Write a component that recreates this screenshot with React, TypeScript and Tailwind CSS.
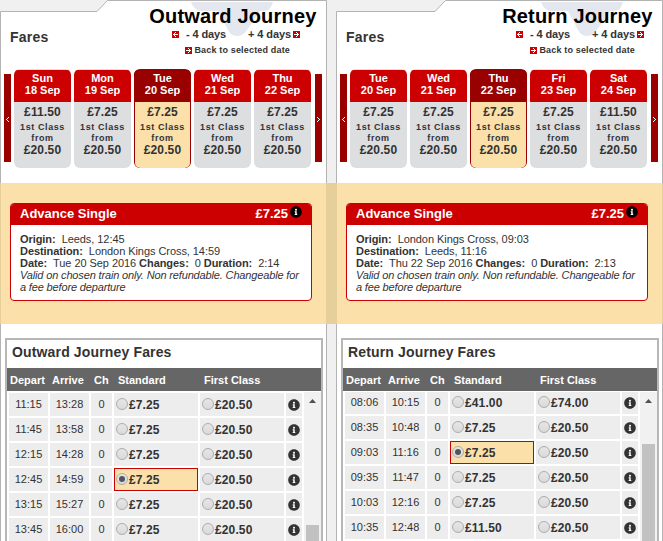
import { useState } from 'react';
import { FaInfoCircle } from 'react-icons/fa';
import clsx from 'clsx';

type Day = { name: string; date: string; standard: string; first: string };
type Train = { depart: string; arrive: string; changes: number; standard: string; first: string };
type Journey = {
  title: string;
  days: Day[];
  selectedDay: number;
  origin: string;
  destination: string;
  date: string;
  duration: string;
  trains: Train[];
  selectedTrain: number;
  notch: number;
  markX: number;
  shiftDays: string;
  shiftBack: string;
  scroll: string;
  thumb: string;
};

const day = (name: string, date: string, standard = '£7.25'): Day => ({ name, date, standard, first: '£20.50' });
const train = (depart: string, arrive: string, standard = '£7.25', first = '£20.50'): Train => ({ depart, arrive, changes: 0, standard, first });

const OUTWARD: Journey = {
  title: 'Outward Journey',
  days: [day('Sun', '18 Sep', '£11.50'), day('Mon', '19 Sep'), day('Tue', '20 Sep'), day('Wed', '21 Sep'), day('Thu', '22 Sep')],
  selectedDay: 2,
  origin: 'Leeds, 12:45',
  destination: 'London Kings Cross, 14:59',
  date: 'Tue 20 Sep 2016',
  duration: '2:14',
  trains: [
    train('11:15', '13:28'), train('11:45', '13:58'), train('12:15', '14:28'),
    train('12:45', '14:59'), train('13:15', '15:27'), train('13:45', '16:00'),
  ],
  selectedTrain: 3,
  notch: 97,
  markX: 191,
  shiftDays: 'pr-[27px]',
  shiftBack: 'pr-[37px]',
  scroll: 'mt-px',
  thumb: 'mt-[133px]',
};

const RETURN: Journey = {
  title: 'Return Journey',
  days: [day('Tue', '20 Sep'), day('Wed', '21 Sep'), day('Thu', '22 Sep'), day('Fri', '23 Sep'), day('Sat', '24 Sep', '£11.50')],
  selectedDay: 2,
  origin: 'London Kings Cross, 09:03',
  destination: 'Leeds, 11:16',
  date: 'Thu 22 Sep 2016',
  duration: '2:13',
  trains: [
    train('08:06', '10:15', '£41.00', '£74.00'), train('08:35', '10:48'), train('09:03', '11:16'),
    train('09:35', '11:47'), train('10:03', '12:16'), train('10:35', '12:48', '£11.50'),
  ],
  selectedTrain: 2,
  notch: 99,
  markX: 205,
  shiftDays: 'pr-[19px]',
  shiftBack: 'pr-[28px]',
  scroll: '-mt-px',
  thumb: 'mt-[52px]',
};

function ArrowSquare({ left }: { left?: boolean }) {
  return (
    <svg width="7" height="7" viewBox="0 0 7 7" shapeRendering="crispEdges" className={clsx('shrink-0', left && '-scale-x-100')}>
      <rect width="7" height="7" fill="#c00" />
      <path d="M1 3h5v1H1zM4 2h1v1H4zM4 4h1v1H4zM3 1h1v1H3zM3 5h1v1H3z" fill="#fff" />
    </svg>
  );
}

function InfoIcon({ className }: { className: string }) {
  return (
    <span className="block h-3 w-3 rounded-full bg-[radial-gradient(circle,#fff_45%,transparent_46%)]">
      <FaInfoCircle size={12} className={className} />
    </span>
  );
}

function Radio({ checked }: { checked: boolean }) {
  return (
    <span className="-mt-px flex h-3 w-3 shrink-0 items-center justify-center rounded-full border border-[#adadad] bg-linear-to-b from-[#e6e6e6] to-[#dadada]">
      {checked && <span className="h-1.5 w-1.5 rounded-full bg-[#555]" />}
    </span>
  );
}

function PageBar({ back }: { back?: boolean }) {
  return (
    <button className={clsx('mt-[5px] flex h-[88px] w-[7px] items-center justify-center bg-[#990000]', !back && 'ml-px')}>
      <svg width="3" height="5" viewBox="0 0 3 5" shapeRendering="crispEdges" className={clsx('mt-[3px]', back && '-scale-x-100')}>
        <path d="M0 0h1v1H0zM1 1h1v1H1zM2 2h1v1H2zM1 3h1v1H1zM0 4h1v1H0z" fill="#fff" />
      </svg>
    </button>
  );
}

function PanelHeader({ journey }: { journey: Journey }) {
  const { notch, markX } = journey;
  return (
    <header className="relative h-[69px]">
      <svg width="327" height="69" className="absolute inset-0 -z-10">
        <path d={`M0.5 70V11.5H${notch}L${notch + 10.5} 0.5H326.5V70Z`} fill="#fff" stroke="#b3b3b3" />
        <path
          transform={`translate(${markX} 0)`}
          d="M0 2H82L80 7Q78 11 73 11H69L56 30Q52 36 46 36Q40 36 37 30L27 11H9Q3 10 0 2Z"
          fill="#e4e8ee"
        />
      </svg>
      <div className="flex justify-between pl-[10px] pr-[10.5px]">
        <h2 className="pt-[29px] text-[14px] leading-4 font-bold tracking-[0.25px] text-[#333]">Fares</h2>
        <h1 className="pt-[5px] text-[20px] leading-[22px] font-bold tracking-[0.18px] text-black">{journey.title}</h1>
      </div>
      <div className={clsx('-mt-[17px] flex items-center justify-end text-[11px] leading-[13px] font-bold tracking-[-0.1px] text-[#333]', journey.shiftDays)}>
        <ArrowSquare left />
        <span className="ml-[7px]">- 4 days</span>
        <span className="mr-[2px] ml-[22px]">+ 4 days</span>
        <ArrowSquare />
      </div>
      <div className={clsx('mt-[4px] flex items-center justify-end gap-[2px] text-[9px] leading-[11px] font-bold tracking-[0.17px] text-[#333]', journey.shiftBack)}>
        <ArrowSquare />
        <span>Back to selected date</span>
      </div>
    </header>
  );
}

function DayCard({ item, selected, onSelect }: { item: Day; selected: boolean; onSelect: () => void }) {
  return (
    <button onClick={onSelect} className={clsx('h-[99px] w-[57px] overflow-hidden rounded-[6px] text-center font-bold', selected ? 'bg-[#990000]' : 'bg-[#dddee0]')}>
      <div className={clsx('h-8 pt-[2px] text-[11px] leading-3 text-white', selected ? 'bg-[#990000]' : 'bg-[#cc0000]')}>
        <div>{item.name}</div>
        <div>{item.date}</div>
      </div>
      <div className={clsx('h-[66px] pt-1 text-[12px] leading-3 text-[#333]', selected ? 'mx-px rounded-b-[5px] bg-[#fbe0a9]' : 'px-px')}>
        <div className="tracking-[0.12px]">{item.standard}</div>
        <div className="-mr-1 -ml-1 pt-1 text-[9px] leading-[11px] tracking-[0.6px]">1st Class<br />from</div>
        <div className="tracking-[0.12px]">{item.first}</div>
      </div>
    </button>
  );
}

function TicketCard({ journey }: { journey: Journey }) {
  return (
    <section className="-mx-px h-[141px] border-x border-[#e7cf9b] bg-[#fbe0a9] pt-5 pr-[14px] pl-[9px]">
      <div className="h-[98px] overflow-hidden rounded-[4px] border border-[#cc0000] bg-white">
        <div className="flex h-[21px] bg-[#cc0000] pr-[9px] pl-[9px] text-[13px] leading-[19px] font-bold text-white">
          <span className="flex-1">Advance Single</span>
          <span className="mr-[2px]">£7.25</span>
          <span className="mt-[2px]"><InfoIcon className="text-black" /></span>
        </div>
        <div className="pt-2 pr-2 pl-[9px] text-[11px] leading-3 tracking-[-0.06px] whitespace-nowrap text-[#333]">
          <p><b>Origin:</b>&nbsp; {journey.origin}</p>
          <p><b>Destination:</b>&nbsp; {journey.destination}</p>
          <p><b>Date:</b>&nbsp; {journey.date} <b>Changes:</b>&nbsp; 0 <b>Duration:</b>&nbsp; {journey.duration}</p>
          <p className="tracking-[-0.15px] italic">Valid on chosen train only. Non refundable. Changeable for<br />a fee before departure</p>
        </div>
      </div>
    </section>
  );
}

function FareCell({ price, selected, onSelect }: { price: string; selected: boolean; onSelect: () => void }) {
  return (
    <button onClick={onSelect}
      className={clsx('flex w-[84px] items-center border pl-px text-[12px] font-bold tracking-[0.12px]', selected ? 'border-[#cc0000] bg-[#fbe0a9]' : 'border-[#ededed] bg-[#ededed]')}>
      <Radio checked={selected} />
      <span className="pt-px pl-[1px]">{price}</span>
    </button>
  );
}

function FaresTable({ journey }: { journey: Journey }) {
  const [picked, setPicked] = useState(`${journey.selectedTrain}-standard`);
  return (
    <section className="mt-[14px] mr-[3px] ml-[4px] h-[220px] overflow-hidden border-2 border-[#b7b7b7] bg-white text-[#333]">
      <h3 className="h-7 pl-[5px] text-[14px] leading-[25px] font-bold tracking-[0.15px]">{journey.title} Fares</h3>
      <div className="flex h-[23px] items-center bg-[#666] pt-[2px] pl-[3px] text-[11px] font-bold text-white">
        <span className="w-[42px]">Depart</span>
        <span className="w-[42px]">Arrive</span>
        <span className="w-[24px]">Ch</span>
        <span className="w-[86px]">Standard</span>
        <span>First Class</span>
      </div>
      <div className="mt-px flex h-[160px] overflow-hidden">
        <div className={clsx('flex w-[297px] flex-col gap-[2px] pl-[2px]', journey.scroll)}>
          {journey.trains.map((t, i) => (
            <div key={t.depart} className="flex h-[23px] shrink-0 gap-[2px] text-center text-[11px] leading-[23px]">
              <span className="w-[39px] bg-[#ededed]">{t.depart}</span>
              <span className="w-[39px] bg-[#ededed]">{t.arrive}</span>
              <span className="w-[21px] bg-[#ededed]">{t.changes}</span>
              <FareCell price={t.standard} selected={picked === `${i}-standard`} onSelect={() => setPicked(`${i}-standard`)} />
              <FareCell price={t.first} selected={picked === `${i}-first`} onSelect={() => setPicked(`${i}-first`)} />
              <span className="flex w-4 items-center justify-center bg-[#ededed] pt-px"><InfoIcon className="text-[#333]" /></span>
            </div>
          ))}
        </div>
        <div className="w-[17px] bg-[#f1f1f1] px-[2px]">
          <svg width="13" height="17" className="absolute">
            <path d="M3 11L6.5 7L10 11Z" fill="#505050" />
          </svg>
          <div className={clsx('h-[160px] bg-[#c1c1c1]', journey.thumb)} />
        </div>
      </div>
    </section>
  );
}

function JourneyPanel({ journey }: { journey: Journey }) {
  const [selected, setSelected] = useState(journey.selectedDay);
  return (
    <div className="isolate w-[327px] shrink-0">
      <PanelHeader journey={journey} />
      <div className="h-[472px] border-x border-[#b3b3b3] bg-white">
        <div className="flex h-[114px] items-start gap-[3px] pl-[3px]">
          <PageBar back />
          {journey.days.map((d, i) => (
            <DayCard key={d.date} item={d} selected={i === selected} onSelect={() => setSelected(i)} />
          ))}
          <PageBar />
        </div>
        <TicketCard journey={journey} />
        <FaresTable journey={journey} />
      </div>
    </div>
  );
}

export default function App() {
  return (
    <div className="flex h-[541px] w-[663px] overflow-hidden bg-[#f0f0f0] font-['Liberation_Sans',Arial,sans-serif]">
      <JourneyPanel journey={OUTWARD} />
      <div className="w-[9px] shrink-0 pt-[183px]">
        <div className="h-[141px] bg-[#e7cf9b]" />
      </div>
      <JourneyPanel journey={RETURN} />
    </div>
  );
}
